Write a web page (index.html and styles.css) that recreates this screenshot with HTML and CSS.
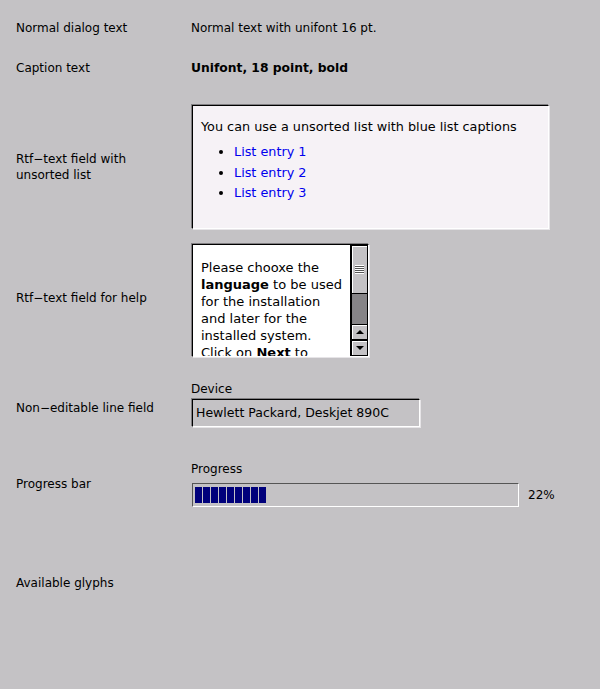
FILE: index.html
```html
<!DOCTYPE html>
<html>
<head>
<meta charset="utf-8">
<link rel="stylesheet" href="styles.css">
</head>
<body>
<div class="page">
  <div class="row r1">
    <div class="label">Normal dialog text</div>
    <div class="value">Normal text with unifont 16 pt.</div>
  </div>
  <div class="row r2">
    <div class="label">Caption text</div>
    <div class="value caption">Unifont, 18 point, bold</div>
  </div>
  <div class="row r3">
    <div class="label">Rtf−text field with<br>unsorted list</div>
    <div class="rtf sunken">
      <p class="rtf-intro">You can use a unsorted list with blue list captions</p>
      <ul class="rtf-list">
        <li>List entry 1</li>
        <li>List entry 2</li>
        <li>List entry 3</li>
      </ul>
    </div>
  </div>
  <div class="row r4">
    <div class="label help-label">Rtf−text field for help</div>
    <div class="help sunken">
      <div class="help-text">
        Please chooxe the <b>language</b> to be used for the installation and later for the installed system.
        <p class="help-p">Click on <b>Next</b> to continue.</p>
      </div>
      <div class="scrollbar">
        <div class="thumb"><span class="grip"></span></div>
        <div class="track"></div>
        <div class="sbtn"><span class="tri-up"></span></div>
        <div class="sbtn"><span class="tri-down"></span></div>
      </div>
    </div>
  </div>
  <div class="row r5">
    <div class="label field-label">Non−editable line field</div>
    <div class="field-group">
      <div class="field-caption">Device</div>
      <div class="line-field sunken">Hewlett Packard, Deskjet 890C</div>
    </div>
  </div>
  <div class="row r6">
    <div class="label">Progress bar</div>
    <div class="field-group">
      <div class="field-caption pcap">Progress</div>
      <div class="progress-line">
        <div class="progress">
          <span class="blk"></span><span class="blk"></span><span class="blk"></span><span class="blk"></span><span class="blk"></span><span class="blk"></span><span class="blk"></span><span class="blk"></span><span class="blk"></span>
        </div>
        <span class="pct">22%</span>
      </div>
    </div>
  </div>
  <div class="row r7">
    <div class="label">Available glyphs</div>
    <div class="value"></div>
  </div>
</div>
</body>
</html>
```

FILE: styles.css
```css
html, body {
  margin: 0;
  padding: 0;
  background: #c4c2c5;
}
body {
  font-family: "DejaVu Sans", sans-serif;
  font-size: 12px;
  color: #000;
  width: 600px;
  height: 689px;
  overflow: hidden;
}
.page {
  padding: 8px 0 0 16px;
}
.row {
  display: grid;
  grid-template-columns: 175px auto;
  align-items: center;
  justify-items: start;
}
.label {
  line-height: 16px;
}
.help-label {
  margin-bottom: 6px;
}
.field-label {
  margin-top: 8px;
}
.r1, .r2 {
  height: 40px;
}
.caption {
  font-weight: bold;
  font-size: 12.3px;
}
.r3 {
  padding-top: 16px;
}
.sunken {
  border-style: solid;
  border-width: 1px;
  border-color: #000 #fff #fff #000;
  box-shadow: -1px -1px 0 0 #807e81, 1px 1px 0 0 #e6e4e7;
}
.rtf {
  width: 357px;
  height: 124px;
  margin-left: 1px;
  margin-top: 1px;
  background: #f6f2f6;
  box-sizing: border-box;
  padding: 13px 0 0 8px;
  font-size: 12.8px;
}
.rtf-intro {
  margin: 0 0 7px 0;
  line-height: 16px;
}
.rtf-list {
  margin: 0;
  padding-left: 33px;
  color: #0000ee;
  line-height: 20.5px;
}
.rtf-list li::marker {
  color: #000;
}
.r4 {
  padding-top: 15px;
}
.help {
  width: 177px;
  height: 113px;
  margin-left: 1px;
  box-sizing: border-box;
  background: #fff;
  display: flex;
  overflow: hidden;
}
.help-text {
  flex: 1;
  padding: 14px 6px 0 8px;
  line-height: 17px;
  font-size: 13px;
  overflow: hidden;
}
.help-p {
  margin: 0;
  padding-top: 0;
}
.scrollbar {
  width: 17px;
  flex: none;
  display: flex;
  flex-direction: column;
  border-left: 1px solid #000;
  background: #c4c2c5;
}
.thumb {
  height: 47px;
  border: 1px solid #000;
  box-shadow: inset 1px 1px 0 #fff;
  background: #c4c2c5;
  display: flex;
  align-items: center;
  justify-content: center;
}
.grip {
  width: 9px;
  height: 9px;
  background: repeating-linear-gradient(to bottom, #fff 0 1px, #555 1px 2px);
}
.track {
  flex: 1;
  background: #868487;
  border-left: 1px solid #000;
  border-right: 1px solid #000;
}
.sbtn {
  height: 14px;
  border: 1px solid #000;
  box-shadow: inset 1px 1px 0 #fff;
  background: #c4c2c5;
  display: flex;
  align-items: center;
  justify-content: center;
}
.tri-up {
  width: 0;
  height: 0;
  border-left: 4px solid transparent;
  border-right: 4px solid transparent;
  border-bottom: 4px solid #000;
}
.tri-down {
  width: 0;
  height: 0;
  border-left: 4px solid transparent;
  border-right: 4px solid transparent;
  border-top: 4px solid #000;
}
.r5 {
  padding-top: 24px;
}
.field-group {
  display: flex;
  flex-direction: column;
}
.field-caption {
  line-height: 16px;
  margin-bottom: 2px;
}
.pcap {
  margin-bottom: 5px;
}
.line-field {
  width: 228px;
  height: 28px;
  margin-left: 1px;
  box-sizing: border-box;
  padding: 0 3px;
  line-height: 26px;
  font-size: 12.5px;
  background: #c4c2c5;
}
.r6 {
  padding-top: 34px;
}
.progress-line {
  display: flex;
  align-items: center;
}
.progress {
  width: 327px;
  height: 24px;
  margin-left: 1px;
  margin-top: 1px;
  box-sizing: border-box;
  border-style: solid;
  border-width: 1px;
  border-color: #555 #fff #fff #555;
  padding: 3px 2px;
  display: flex;
  gap: 1px;
}
.blk {
  width: 7px;
  height: 16px;
  background: #00007b;
}
.pct {
  margin-left: 9px;
}
.r7 {
  padding-top: 68px;
}
```
